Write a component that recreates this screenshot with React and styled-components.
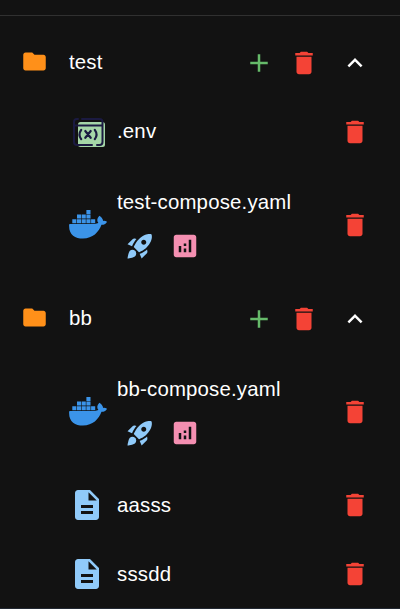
import React from "react";
import styled, { createGlobalStyle } from "styled-components";
import {
  MdFolder,
  MdAdd,
  MdDelete,
  MdExpandLess,
  MdRocketLaunch,
  MdAnalytics,
  MdDescription,
} from "react-icons/md";

const GlobalStyle = createGlobalStyle`
  body {
    margin: 0;
    background: #121212;
    color: #fff;
    font-family: "Liberation Sans", Arial, sans-serif;
    font-size: 20.4px;
    line-height: 30px;
    letter-spacing: 0.18px;
  }
`;

const Panel = styled.main`
  box-sizing: border-box;
  height: 609px;
  overflow: hidden;
  background: #121212;
  border-bottom: 1px solid #222832;
`;

const TopBar = styled.div`
  box-sizing: border-box;
  height: 16px;
  margin-bottom: 11px;
  border-bottom: 1px solid #303030;
`;

const Row = styled.div`
  box-sizing: border-box;
  display: flex;
  align-items: center;
  height: ${(p) => p.$height}px;
  padding-right: 30px;
`;

const FolderRow = styled(Row)`
  padding-left: 21px;
`;

const FileRow = styled(Row)`
  padding-left: 69px;
`;

const IconSlot = styled.span`
  display: flex;
  flex: none;
  align-items: center;
  width: ${(p) => p.$width}px;
  padding-bottom: ${(p) => p.$lift || 0}px;
  color: ${(p) => p.$color};
`;

const Label = styled.div`
  flex: 1;
  min-width: 0;
  padding-bottom: ${(p) => p.$lift || 0}px;
  white-space: nowrap;
`;

const FileActions = styled.div`
  display: flex;
  gap: 15px;
  padding: 14px 0 0 8px;
`;

const IconButton = styled.button`
  display: flex;
  flex: none;
  padding: 0;
  border: 0;
  background: none;
  color: ${(p) => p.$color};
`;

const HeaderActions = styled.div`
  display: flex;
  align-items: center;
  padding-top: 1px;

  ${IconButton}:nth-child(2) {
    margin-left: 15px;
  }
  ${IconButton}:nth-child(3) {
    margin-left: 21px;
  }
`;

const EnvIcon = () => (
  <svg width="34" height="32" viewBox="0 0 34 32" fill="none">
    <rect x="6" y="6" width="27" height="25" rx="2.5" fill="#a5d6a7" />
    <path
      d="M6 3H5a3 3 0 0 0-3 3v20a3 3 0 0 0 3 3h15M10 3h17.5a3 3 0 0 1 3 3v20a3 3 0 0 1-3 3H25M2 9.5h28.5"
      stroke="#1b1a41"
      strokeWidth="2"
      strokeLinecap="round"
    />
    <path
      d="M9.2 13.8q-3.400 4.700 0 9.400M22.800 13.800q3.400 4.700 0 9.400M13.300 15l5.400 6.800M18.700 15l-5.400 6.800"
      stroke="#1b1a41"
      strokeWidth="2.2"
      strokeLinecap="round"
    />
  </svg>
);

const DockerIcon = () => (
  <svg width="38" height="30" viewBox="0 0 38 30" fill="currentColor">
    <path d="M17.4 1h4.1v4h-4.1zM8 5.600h4.100v4H8zM12.700 5.600h4.100v4h-4.100zM17.400 5.600h4.100v4h-4.100zM3.300 10.200h4.100v4H3.300zM8 10.200h4.100v4H8zM12.700 10.200h4.100v4h-4.100zM17.400 10.200h4.100v4h-4.100zM22.100 10.200h4.100v4h-4.100z" />
    <path d="M.9 14.900h24.800c1.300 0 2.700-.3 3.700-.8-1.700-2.200-1.400-4.900.4-6.700l.6-.6.700.5c1.800 1.300 2.800 2.900 3 4.600 1.300-.2 2.800 0 3.900.8l-.4.8c-1 1.900-3.100 2.400-5.100 2.300C29.700 23.200 23.800 29.500 14 29.500 6.200 29.500.1 25.900.1 16.900v-1.200c0-.5.3-.8.8-.8z" />
  </svg>
);

const fileIcons = {
  env: { color: "#a5d6a7", icon: <EnvIcon /> },
  docker: { color: "#3b94e9", icon: <DockerIcon /> },
  text: { color: "#90caf9", icon: <MdDescription size={36} /> },
};

const DeleteButton = () => (
  <IconButton $color="#f44336" aria-label="Delete">
    <MdDelete size={30} />
  </IconButton>
);

const Folder = ({ name }) => (
  <FolderRow $height={70}>
    <IconSlot $width={48} $lift={1} $color="#ff9019">
      <MdFolder size={27} />
    </IconSlot>
    <Label>{name}</Label>
    <HeaderActions>
      <IconButton $color="#66bb6a" aria-label="Add">
        <MdAdd size={30} />
      </IconButton>
      <DeleteButton />
      <IconButton $color="#fff" aria-label="Collapse">
        <MdExpandLess size={30} />
      </IconButton>
    </HeaderActions>
  </FolderRow>
);

const FileIcon = styled(IconSlot)`
  box-sizing: border-box;
  padding-left: ${(p) => p.$inset}px;
`;

const File = ({ name, kind }) => {
  const compose = kind === "docker";
  const { color, icon } = fileIcons[kind];
  return (
    <FileRow $height={compose ? 117 : 69}>
      <FileIcon
        $width={48}
        $inset={kind === "env" ? 3 : 0}
        $lift={compose ? 1 : 0}
        $color={color}
      >
        {icon}
      </FileIcon>
      <Label $lift={kind === "text" ? 0 : 2}>
        {name}
        {compose && (
          <FileActions>
            <IconButton $color="#90caf9" aria-label="Deploy">
              <MdRocketLaunch size={30} />
            </IconButton>
            <IconButton $color="#f48fb1" aria-label="Statistics">
              <MdAnalytics size={30} />
            </IconButton>
          </FileActions>
        )}
      </Label>
      <DeleteButton />
    </FileRow>
  );
};

export default function App() {
  return (
    <>
      <GlobalStyle />
      <Panel>
        <TopBar />
        <Folder name="test" />
        <File name=".env" kind="env" />
        <File name="test-compose.yaml" kind="docker" />
        <Folder name="bb" />
        <File name="bb-compose.yaml" kind="docker" />
        <File name="aasss" kind="text" />
        <File name="sssdd" kind="text" />
      </Panel>
    </>
  );
}
